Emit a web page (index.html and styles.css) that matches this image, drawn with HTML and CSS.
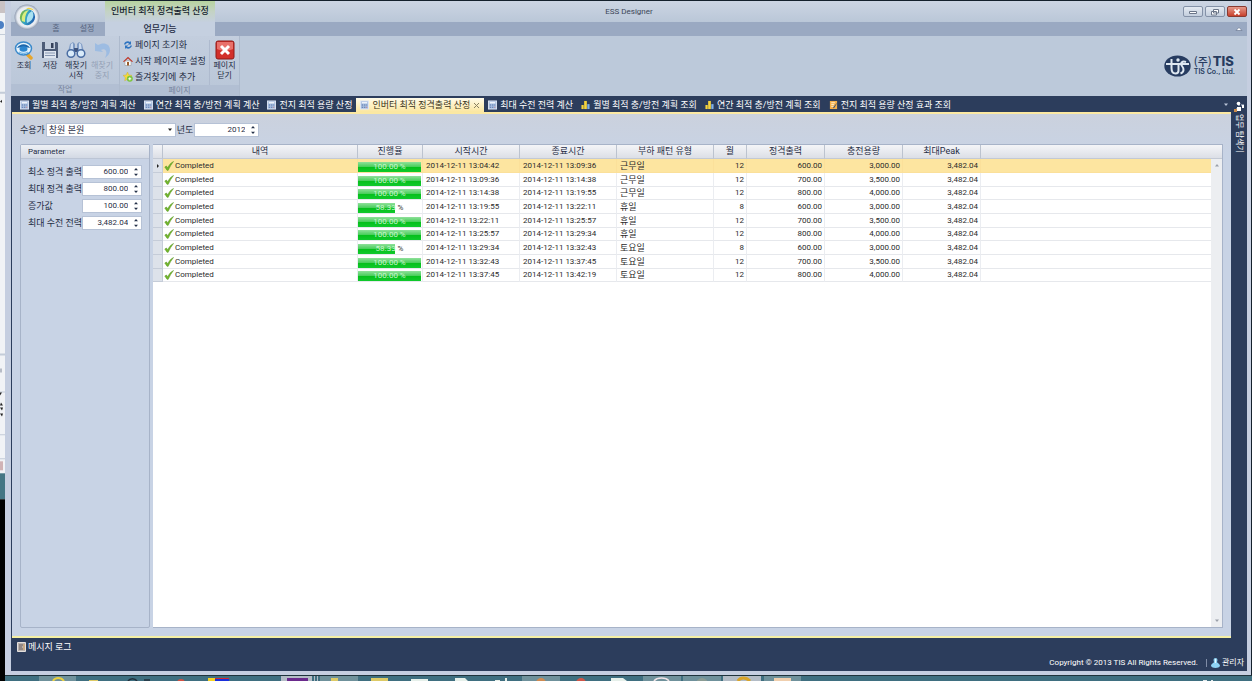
FILE: index.html
```html
<!DOCTYPE html>
<html lang="ko">
<head>
<meta charset="utf-8">
<title>ESS Designer</title>
<link rel="stylesheet" href="styles.css">
</head>
<body>
<svg class="defs" width="0" height="0" aria-hidden="true">
  <symbol id="i-calc" viewBox="0 0 10 10"><rect x=".5" y=".5" width="9" height="9" fill="#a9bfe0" stroke="#dfe7f5"/><path d="M2 2.5h6" stroke="#f4f7fc" stroke-width="1.5"/><path d="M2 5h1.5M4.5 5H6M7 5h1M2 7.5h1.500M4.500 7.500H6" stroke="#4f6ea5"/><path d="M7 7.500h1" stroke="#d0605a"/></symbol>
  <symbol id="i-chart" viewBox="0 0 10 10"><path d="M.5 5h2.500v4.500H.5z" fill="#f6d43c"/><path d="M3.500 .5h3v9h-3z" fill="#f6d43c"/><path d="M7 4h2.500v5.500H7z" fill="#7fb0e8"/></symbol>
  <symbol id="i-note" viewBox="0 0 10 10"><path d="M1 .5h8v9H1z" fill="#f4b04c"/><path d="M2.500 2.500h4M2.500 4.500h3M2.500 6.500h4" stroke="#fff3d8"/><path d="M9.500 2 5 7l-.5 1.500L6 8z" fill="#41506b"/></symbol>
  <symbol id="i-check" viewBox="0 0 10 10"><path d="M.8 6 2.500 5l1.200 2C5 4 6.800 1.800 9.500.5 7.500 3 5.600 6 4.200 9.300H3z" fill="#74b82a" stroke="#4f8e1c" stroke-width=".5"/></symbol>
  <symbol id="i-spin" viewBox="0 0 6 10"><path d="M1 3.200 3 1l2 2.200zM1 6.800h4L3 9z" fill="#26324a"/></symbol>
</svg>

<div class="desktop">
  <svg class="behind" viewBox="0 0 5 675" preserveAspectRatio="none" aria-hidden="true">
    <path fill="#f1f3f6" d="M0 0h5v675H0z"/><path fill="#c9c2c4" d="M0 0h5v12H0z"/>
    <circle cx="0" cy="24" r="4" fill="#4b7fc4"/><path fill="#c3ccd8" d="M0 33h5v1H0zM0 91h5v2H0zM0 353h5v2H0zM0 391h5v1H0zM0 434h5v1H0zM0 458h5v1H0z"/>
    <path fill="#b7bcc6" d="M0 368h2v4H0z"/><path fill="#222" d="M0 101l2-2v3zM0 392h2l-2 3zM0 405l1-3 2 3zM0 407h3l-1 3zM0 413h3l-1 3z"/>
    <path fill="#d0b3b6" d="M0 461h3v9H0z"/><path fill="#447684" d="M0 473h5v26H0z"/><path fill="#000" d="M0 499h5v176H0z"/>
  </svg>

  <div class="window">
    <header class="titlebar">
      <div class="context-title">인버터 최적 정격출력 산정</div>
      <h1 class="app-title">ESS Designer</h1>
      <div class="win-buttons">
        <button class="win-btn" aria-label="최소화"><svg width="10" height="8" viewBox="0 0 10 8"><path d="M1.500 3.500h7v2h-7z" fill="#fff" stroke="#6b7689"/></svg></button>
        <button class="win-btn" aria-label="이전 크기로"><svg width="10" height="8" viewBox="0 0 10 8"><path d="M3.500 1.500h5v3.500h-5zM1.500 3.500h5V7h-5z" fill="#fff" stroke="#6b7689"/></svg></button>
        <button class="win-btn win-close" aria-label="닫기"><svg width="10" height="8" viewBox="0 0 10 8"><path d="M2.500 1.500l5 5M7.500 1.500l-5 5" stroke="#fff" stroke-width="1.800"/></svg></button>
      </div>
      <button class="orb" aria-label="메뉴"><svg width="26" height="26" viewBox="0 0 26 26"><defs><radialGradient id="og"><stop offset="0" stop-color="#fff"/><stop offset=".8" stop-color="#e6eaf0"/><stop offset="1" stop-color="#8f9bb0"/></radialGradient><linearGradient id="lg" x1="0" x2="1"><stop offset="0" stop-color="#7cb93a"/><stop offset=".4" stop-color="#37a6c4"/><stop offset="1" stop-color="#1f5fae"/></linearGradient></defs><circle cx="13" cy="13" r="12.500" fill="url(#og)"/><ellipse cx="13.500" cy="13" rx="7.500" ry="8" transform="rotate(20 13 13)" fill="url(#lg)"/><path d="M13 19c-1-5 1-10 5-12 3 4 1 10-5 12z" fill="#a9e2f2"/><path d="M8 17C7 11 10 7 15 6c-3 3-4 6-4 12z" fill="#d9ee7d"/><path d="M12 4.500c3-1.500 6-.5 8 2-3-1-5-1.500-8-2z" fill="#f2d23b"/></svg></button>
    </header>

    <nav class="ribbon-tabs">
      <button class="rtab">홈</button>
      <button class="rtab">설정</button>
      <button class="rtab rtab-active">업무기능</button>
      <button class="collapse" aria-label="리본 최소화"><svg width="8" height="6" viewBox="0 0 8 6"><path d="M1 4.500 4 1.500l3 3z" fill="#fff" stroke="#5a6a86" stroke-width=".6"/></svg></button>
    </nav>

    <section class="ribbon">
      <div class="group group-work">
        <div class="group-body">
          <button class="big"><svg width="20" height="20" viewBox="0 0 20 20"><path d="M12 13l5 5" stroke="#e7a62c" stroke-width="3.500" stroke-linecap="round"/><ellipse cx="9.500" cy="8.500" rx="8" ry="6.500" fill="#e8f4fc" stroke="#3b8acb" stroke-width="1.500"/><path d="M3 8c3-5 10-5 13 0-2-1-11-1-13 0z" fill="#1e67ac"/><ellipse cx="9.500" cy="9" rx="4" ry="2.800" fill="#2b86cf"/><path d="M5 12c3 2 6 2 9 0" stroke="#7dbce8" stroke-width="1.500" fill="none"/></svg>조회</button>
          <button class="big"><svg width="20" height="20" viewBox="0 0 20 20"><path d="M2 2h15l1 1v15H2z" fill="#4d5c78"/><path d="M5 2h10v7H5z" fill="#c3cede"/><path d="M11 3h2.500v5H11z" fill="#35415a"/><path d="M4 11h12v7H4z" fill="#dfe6f0"/><path d="M5 13h10M5 15.500h10" stroke="#8797b2"/></svg>저장</button>
          <button class="big"><svg width="20" height="20" viewBox="0 0 20 20"><path d="M4 4l3-2 2 2v8H2zM16 4l-3-2-2 2v8h7z" fill="#7f9bc4"/><path d="M5 4l2-1v8H4zM15 4l-2-1v8h3z" fill="#c9d9ee"/><path d="M8 8h4v4H8z" fill="#3f5680"/><circle cx="5" cy="13.500" r="3.800" fill="#d9ebfa" stroke="#4a6da3" stroke-width="1.500"/><circle cx="15" cy="13.500" r="3.800" fill="#d9ebfa" stroke="#4a6da3" stroke-width="1.500"/></svg>해찾기<br>시작</button>
          <button class="big" disabled><svg width="20" height="20" viewBox="0 0 20 20"><path d="M3 3l3 2c5-3 12-2 12 5 0 3-2 6-5 8 1-3 2-5 1-7-1-2-3-2-5-1l2 2-8-1z" fill="#9dbce2"/></svg>해찾기<br>중지</button>
        </div>
        <div class="group-caption">작업</div>
      </div>
      <div class="group group-page">
        <div class="group-body">
          <div class="small-list">
            <button class="small"><svg width="10" height="10" viewBox="0 0 10 10"><path d="M1 4.500C1.500 1.500 5 .5 7 2l1-1v3.500H4.700L6 3.200C4.500 2.500 3 3 2.500 4.500zM9 5.500C8.500 8.500 5 9.500 3 8l-1 1V5.500h3.300L4 6.800C5.500 7.500 7 7 7.500 5.500z" fill="#2f74c0"/></svg>페이지 초기화</button>
            <button class="small"><svg width="10" height="10" viewBox="0 0 10 10"><path d="M2 5h6v4.500H2z" fill="#fff" stroke="#8d8d8d" stroke-width=".5"/><path d="M0 5.500 5 .8l5 4.700-1 .6-4-3.600L1 6.100z" fill="#c0392b"/><path d="M4 6h2v3.500H4z" fill="#9a5b2c"/></svg>시작 페이지로 설정</button>
            <button class="small"><svg width="10" height="10" viewBox="0 0 10 10"><path d="M4.500 0l1.400 3 3.100.4-2.300 2.200.6 3.200-2.800-1.600-2.800 1.600.6-3.200L0 3.400 3.100 3z" fill="#f5d93d" stroke="#c7a92c" stroke-width=".4"/><circle cx="6.800" cy="6.800" r="3" fill="#7cc53c"/><path d="M6.800 5.300v3M5.300 6.800h3" stroke="#fff"/></svg>즐겨찾기에 추가</button>
          </div>
          <button class="big big-close"><svg width="20" height="20" viewBox="0 0 20 20"><rect x="1" y="1" width="18" height="18" rx="2" fill="#d2302b" stroke="#8f1b18"/><path d="M2 2h16v7c-5 2-11 2-16 0z" fill="#e8716b"/><path d="M6 6l8 8M14 6l-8 8" stroke="#fff" stroke-width="3"/></svg>페이지<br>닫기</button>
        </div>
        <div class="group-caption">페이지</div>
      </div>
      <div class="brand">
        <svg width="27" height="22" viewBox="0 0 27 22" aria-hidden="true"><ellipse cx="13.500" cy="11" rx="13.200" ry="10.500" fill="#273c60"/><path d="M2 9h23M7.500 4v9c0 4 1.500 5.500 4 5.500 2 0 3-1 3-3V9" stroke="#dfe8f1" stroke-width="2" fill="none"/><circle cx="14" cy="5" r="1.700" fill="#dfe8f1"/><path d="M22 7c-4-1.500-6 1.500-4 4 2 2.500 2.500 6-1.500 7.500" stroke="#dfe8f1" stroke-width="2" fill="none"/></svg>
        <div class="brand-text"><div class="brand-top"><span class="brand-ju">(주)</span><span class="brand-tis">TIS</span></div><div class="brand-sub">TIS Co., Ltd.</div></div>
      </div>
    </section>

    <div class="workspace">
      <main class="main">
        <nav class="doc-tabs">
          <button class="dtab"><svg class="ic"><use href="#i-calc"/></svg>월별 최적 충/방전 계획 계산</button>
          <button class="dtab"><svg class="ic"><use href="#i-calc"/></svg>연간 최적 충/방전 계획 계산</button>
          <button class="dtab"><svg class="ic"><use href="#i-calc"/></svg>전지 최적 용량 산정</button>
          <button class="dtab dtab-active"><svg class="ic"><use href="#i-calc"/></svg>인버터 최적 정격출력 산정<svg width="7" height="7" viewBox="0 0 7 7"><path d="M1 1l5 5M6 1 1 6" stroke="#8a8062"/></svg></button>
          <button class="dtab"><svg class="ic"><use href="#i-calc"/></svg>최대 수전 전력 계산</button>
          <button class="dtab"><svg class="ic"><use href="#i-chart"/></svg>월별 최적 충/방전 계획 조회</button>
          <button class="dtab"><svg class="ic"><use href="#i-chart"/></svg>연간 최적 충/방전 계획 조회</button>
          <button class="dtab"><svg class="ic"><use href="#i-note"/></svg>전지 최적 용량 산정 효과 조회</button>
          <button class="more" aria-label="탭 목록"><svg width="6" height="4" viewBox="0 0 6 4"><path d="M1 .5h4L3 3z" fill="#b9c4d8"/></svg></button>
        </nav>

        <div class="page">
          <form class="filters">
            <label for="cust">수용가</label>
            <span class="field field-cust"><select id="cust"><option>창원 본원</option></select><svg width="6" height="4" viewBox="0 0 6 4"><path d="M1 .5h4L3 3z" fill="#222"/></svg></span>
            <label for="year">년도</label>
            <span class="field field-year"><input id="year" value="2012"><svg width="6" height="10"><use href="#i-spin"/></svg></span>
          </form>
          <div class="split">
            <section class="panel">
              <h2 class="panel-head">Parameter</h2>
              <div class="params">
                <label for="p1">최소 정격 출력</label><span class="field"><input id="p1" value="600.00"><svg width="6" height="10"><use href="#i-spin"/></svg></span>
                <label for="p2">최대 정격 출력</label><span class="field"><input id="p2" value="800.00"><svg width="6" height="10"><use href="#i-spin"/></svg></span>
                <label for="p3">증가값</label><span class="field"><input id="p3" value="100.00"><svg width="6" height="10"><use href="#i-spin"/></svg></span>
                <label for="p4">최대 수전 전력</label><span class="field"><input id="p4" value="3,482.04"><svg width="6" height="10"><use href="#i-spin"/></svg></span>
              </div>
            </section>
            <section class="gridbox">
              <table class="grid">
                <colgroup><col class="c-ind"><col class="c-desc"><col class="c-prog"><col class="c-time"><col class="c-time"><col class="c-time"><col class="c-mon"><col class="c-num"><col class="c-num"><col class="c-num"><col></colgroup>
                <thead><tr><th></th><th>내역</th><th>진행율</th><th>시작시간</th><th>종료시간</th><th>부하 패턴 유형</th><th>월</th><th>정격출력</th><th>충전용량</th><th>최대Peak</th><th></th></tr></thead>
                <tbody id="rows"></tbody>
              </table>
              <div class="scroll" aria-hidden="true"><svg width="6" height="4" viewBox="0 0 6 4"><path d="M1 3.500h4L3 1z" fill="#9aa0aa"/></svg><svg width="6" height="4" viewBox="0 0 6 4"><path d="M1 .5h4L3 3z" fill="#9aa0aa"/></svg></div>
            </section>
          </div>
        </div>
      </main>
      <aside class="side"><svg width="10" height="11" viewBox="0 0 10 11"><path d="M5 1v4M2 8h5M7 4h3" stroke="#cdd6e6"/><circle cx="4.500" cy="2.500" r="1.800" fill="#fff"/><path d="M3 6h4v4H3z" fill="#fff"/><path d="M0 8h3v3H0z" fill="#c98b4b"/><path d="M8 4h2v3H8z" fill="#fff"/></svg><button class="side-tab">업무 탐색기</button></aside>
    </div>

    <footer class="bottom">
      <button class="log"><svg width="9" height="10" viewBox="0 0 9 10"><path d="M.5.5h8v9h-8z" fill="#b9b2ae" stroke="#e4dfdc"/><path d="M2 3h4M2 5h3M2 7h4" stroke="#6c5f5c"/><path d="M7 2v6" stroke="#d8a15c"/></svg>메시지 로그</button>
      <div class="status"><span>Copyright © 2013 TIS All Rights Reserved.</span><span class="bar"></span><span class="user"><svg width="9" height="10" viewBox="0 0 9 10"><path d="M4.500 0c2 0 2.300 2 1.500 4 0 1 3 1.500 3 4-1 2.500-8 2.500-9 0C0 5.500 3 5 3 4 2.200 2 2.500 0 4.500 0z" fill="#8fd3f4"/><path d="M4.500 1v4" stroke="#e8f8ff"/></svg>관리자</span></div>
    </footer>
  </div>
</div>

<svg class="taskbar" viewBox="0 0 1252 6" preserveAspectRatio="xMinYMin slice" aria-hidden="true">
  <path fill="#3f6f80" d="M0 0h1252v6H0z"/><path fill="#000" d="M0 0h5v6H0z"/><path fill="#1f333c" d="M5 0h1247v1H5z"/>
  <path fill="#6f919b" d="M39 1h37v5H39zM320 1h38v5h-38zM522 1h38v5h-38zM643 1h38v5h-38zM683 1h38v5h-38zM764 1h37v5h-37z"/>
  <path fill="#b3bcc6" d="M281 1h31v5h-31zM314 1h1v5h-1zM317 1h1v5h-1zM723 1h38v5h-38z"/>
  <path fill="#6a2a8c" d="M287 3h21v3h-21z"/>
  <path d="M53 6c2-4 8-4 11 0" fill="none" stroke="#ead03e" stroke-width="2"/><path fill="#ddca66" d="M89 5h9v1h-9zM331 3h7v3h-7zM371 3h17v3h-17z"/>
  <path d="M128 6c2-3 7-3 9 0M144 5h6" fill="none" stroke="#22303c" stroke-width="1.500"/><circle cx="181" cy="8" r="4" fill="#d35142"/>
  <path fill="#f6d222" d="M208 3h7v3h-7z"/><path fill="#d42a2a" d="M215 3h14v1h-14z"/><path fill="#1a2fdc" d="M215 4h14v2h-14z"/>
  <path fill="#e6f0ea" d="M411 4h17v2h-17zM455 3h10l3 3h-13zM495 5h5v1h-5zM505 3h2v3h-2zM611 3h12l4 3h-16z"/>
  <circle cx="541" cy="8" r="5" fill="#cf8b52"/><circle cx="581" cy="8" r="5" fill="#cf5648"/><path d="M654 6c3-4 12-4 15 0" fill="none" stroke="#f1e4e8" stroke-width="1.500"/>
  <circle cx="702" cy="9" r="6" fill="#8b9c94"/><path d="M738 6c2-4 8-4 12 0" stroke="#d9a428" stroke-width="3" fill="none"/><path fill="#f0cfae" d="M774 3h17v3h-17z"/><path fill="#dfe9ec" d="M1203 5h4v1h-4zM1211 5h2v1h-2z"/>
</svg>
<script src="grid.js"></script>
</body>
</html>
```
FILE: styles.css
```css
* { box-sizing: border-box; }

body {
  margin: 0;
  height: 100vh;
  display: flex;
  flex-direction: column;
  overflow: hidden;
  background: #14202c;
  color: #1f2c44;
  font: 9px/12px Roboto, "Noto Sans CJK KR", sans-serif;
}

button, input, select { font: inherit; color: inherit; border: 0; margin: 0; padding: 0; background: none; }
button { cursor: pointer; white-space: nowrap; }
svg { display: block; flex: none; }
h1, h2 { margin: 0; font-weight: 400; }
.defs { position: absolute; }

.desktop { flex: 1; min-height: 0; display: flex; padding-top: 1px; }
.behind { width: 5px; height: 100%; }
.taskbar { width: 100%; height: 6px; }

.window {
  flex: 1;
  min-width: 0;
  display: flex;
  flex-direction: column;
  margin-right: 1px;
  padding: 0 4px 4px 6px;
  background: #c5cee0;
}

/* title bar */
.titlebar {
  position: relative;
  display: grid;
  grid-template-columns: 1fr auto 1fr;
  align-items: center;
  height: 21px;
  background: linear-gradient(#ccd5e3, #bac7d8);
}
.context-title {
  align-self: stretch;
  width: 110px;
  margin-left: 94px;
  line-height: 20px;
  text-align: center;
  font-weight: 500;
  white-space: nowrap;
  color: #151e2e;
  background: linear-gradient(#b7d39f, #c4d3c4 50%, #c5d0de);
}
.app-title { font-size: 8px; color: #3b4658; }
.win-buttons { justify-self: end; display: flex; gap: 2px; }
.win-btn {
  display: flex;
  align-items: center;
  justify-content: center;
  width: 20px;
  height: 11px;
  border: 1px solid #8492a8;
  border-radius: 2px;
  background: linear-gradient(#e4eaf2, #c3cedd);
}
.win-close { border-color: #8a3a30; background: linear-gradient(#e59a8b, #c8402c); }
.orb { position: absolute; left: 3px; top: 3px; z-index: 2; }

/* ribbon */
.ribbon-tabs {
  display: flex;
  height: 14px;
  padding-left: 30px;
  background: #9aa9c2;
}
.rtab { width: 30px; line-height: 14px; font-size: 8px; color: #56647f; }
.rtab:nth-child(2) { width: 34px; padding-right: 2px; }
.rtab-active { width: 110px; font-size: 9px; font-weight: 500; color: #1f2c44; background: #c5d0e0; }
.collapse { margin-left: auto; padding: 0 4px; }

.ribbon { display: flex; height: 60px; background: #bcc9da; }
.group { display: flex; flex-direction: column; border-right: 1px solid #adbacd; background: linear-gradient(#c3cede, #b9c6d8); }
.group-body { flex: 1; display: flex; padding-top: 4px; }
.group-work .group-body { width: 108px; }
.group-caption { height: 12px; line-height: 12px; text-align: center; font-size: 8px; color: #76839b; background: #b2bfd3; }
.big {
  display: flex;
  flex-direction: column;
  align-items: center;
  width: 26px;
  font-size: 8px;
  line-height: 10px;
}
.big svg { margin-bottom: 1px; }
.big:disabled { color: #94a1b6; }
.big-close { width: 30px; border-left: 1px solid #aebace; }
.small-list { display: flex; flex-direction: column; width: 89px; padding-left: 3px; margin-top: -3px; }
.small { display: flex; align-items: center; gap: 2px; height: 16px; }

.brand { margin-left: auto; display: flex; align-items: center; gap: 3px; padding-right: 12px; color: #273c60; }
.brand-top { display: flex; align-items: center; gap: 1px; height: 11px; }
.brand-tis { font: 800 13px/11px Inter, sans-serif; }
.brand-ju { font: 500 11px/11px "Noto Sans CJK KR", sans-serif; }
.brand-sub { margin-top: 1px; font: 600 7px/8px Inter, sans-serif; }

/* document area */
.workspace { flex: 1; min-height: 0; display: flex; background: #2c3d5c; }
.main { flex: 1; min-width: 0; display: flex; flex-direction: column; padding-left: 1px; }
.doc-tabs { display: flex; height: 18px; padding: 2px 2px 0 4px; border-bottom: 2px solid #fbe8a2; }
.dtab { display: flex; align-items: center; gap: 3px; padding: 0 4px; color: #fff; }
.dtab-active { color: #3a3420; background: linear-gradient(#fffbea, #fbe6a0); }
.ic { width: 9px; height: 10px; }
.more { margin-left: auto; }

.page {
  flex: 1;
  min-height: 0;
  display: flex;
  flex-direction: column;
  padding: 9px 8px 8px;
  border-bottom: 2px solid #f5f0a4;
  background: linear-gradient(#cbd1dd, #c8d3e5 40px);
}
.filters { display: flex; align-items: center; gap: 1px; height: 14px; margin-bottom: 7px; }
.field { display: flex; align-items: center; height: 14px; padding-right: 2px; border: 1px solid #b6c2d6; background: #fff; }
.field input { flex: 1; width: 0; min-width: 0; padding-right: 5px; text-align: right; font-size: 8px; line-height: 12px; outline: 0; }
.field select { flex: 1; appearance: none; padding-left: 2px; line-height: 12px; outline: 0; }
.field-cust { width: 130px; }
.field-year { width: 65px; }

.split { flex: 1; min-height: 0; display: flex; gap: 3px; }
.panel { width: 130px; border: 1px solid #a7b3c8; border-radius: 2px; }
.panel-head { height: 14px; padding-left: 7px; font-size: 8px; line-height: 13px; border-bottom: 1px solid #bcc5d5; background: linear-gradient(#edf0f5, #d3d9e4); }
.params { display: grid; grid-template-columns: 1fr 60px; row-gap: 3px; align-items: center; padding: 6px 7px 0; white-space: nowrap; }

.gridbox { position: relative; flex: 1; min-width: 0; border: 1px solid #a7b3c8; border-left-width: 0; background: #fff; overflow: hidden; }
.grid { width: 100%; table-layout: fixed; border-collapse: separate; border-spacing: 0; }
.c-ind { width: 10px; }
.c-desc { width: 195px; }
.c-prog { width: 65px; }
.c-time { width: 97px; }
.c-mon { width: 33px; }
.c-num { width: 78px; }
.grid th {
  height: 14px;
  padding: 0;
  line-height: 13px;
  font-weight: 400;
  border-right: 1px solid #bcc3cf;
  border-bottom: 1px solid #c3c9d4;
  background: linear-gradient(#f4f5f8, #dcdfe6);
}
.grid td { height: 14px; padding: 0 2px; line-height: 12px; white-space: nowrap; border-right: 1px solid #ebedf1; border-bottom: 1px solid #e6e8ec; color: #2b2b2b; }
.grid tr:nth-child(3n) td { height: 13px; }
.grid td:first-child { padding: 0 0 0 3px; background: #dde2ea; border-color: #c5ccd8; }
.grid th:last-child, .grid td:last-child { border-right: 0; }
.grid .sel td:not(:first-child) { background: #fde5a0; border-color: #fbe09a; }
.grid .n { padding-right: 2px; text-align: right; font-size: 8px; }
.grid .t, .grid .k { padding-left: 3px; }
.grid .t { font-size: 8px; }
.grid .p { padding: 0 1px 0 0; }
.grid .d { padding-left: 1px; }
.done { display: flex; align-items: center; gap: 1px; font-size: 8px; }
.meter { position: relative; height: 10px; margin-top: 2px; background: #fff; }
.meter-fill { height: 10px; background: linear-gradient(#8fe09a, #4ccf5e 45%, #06c01c 55%, #10c92c); }
.meter-text { position: absolute; inset: 0; text-align: center; font-size: 8px; line-height: 9px; color: #c9f7cf; }
.meter-unit { color: #333; }
.full .meter-unit { color: inherit; }

.scroll {
  position: absolute;
  top: 14px;
  right: 0;
  bottom: 0;
  width: 11px;
  display: flex;
  flex-direction: column;
  justify-content: space-between;
  align-items: center;
  padding: 4px 0;
  background: #eceef1;
}

.side { width: 16px; display: flex; flex-direction: column; align-items: center; gap: 2px; padding-top: 5px; }
.side-tab { writing-mode: vertical-rl; text-orientation: sideways; font-size: 8px; line-height: 12px; color: #fff; }

/* bottom bar */
.bottom { height: 33px; display: flex; justify-content: space-between; padding: 3px 3px 2px 6px; color: #fff; background: #2c3d5c; }
.log { align-self: flex-start; display: flex; align-items: center; gap: 2px; }
.status { align-self: flex-end; display: flex; align-items: center; gap: 8px; font-size: 8px; }
.bar { width: 1px; height: 8px; background: #7f8ca6; }
.user { display: flex; align-items: center; gap: 2px; margin-left: -4px; }
```
FILE: grid.js
```js
const data = [
  ["100.00", "13:04:42", "13:09:36", "근무일", 12, "600.00", "3,000.00"],
  ["100.00", "13:09:36", "13:14:38", "근무일", 12, "700.00", "3,500.00"],
  ["100.00", "13:14:38", "13:19:55", "근무일", 12, "800.00", "4,000.00"],
  ["58.33", "13:19:55", "13:22:11", "휴일", 8, "600.00", "3,000.00"],
  ["100.00", "13:22:11", "13:25:57", "휴일", 12, "700.00", "3,500.00"],
  ["100.00", "13:25:57", "13:29:34", "휴일", 12, "800.00", "4,000.00"],
  ["58.33", "13:29:34", "13:32:43", "토요일", 8, "600.00", "3,000.00"],
  ["100.00", "13:32:43", "13:37:45", "토요일", 12, "700.00", "3,500.00"],
  ["100.00", "13:37:45", "13:42:19", "토요일", 12, "800.00", "4,000.00"]
];
document.getElementById("rows").innerHTML = data.map(([p, s, e, kind, month, out, cap], i) => `
  <tr class="${i === 0 ? "sel" : ""}">
    <td>${i === 0 ? '<svg width="4" height="6" viewBox="0 0 4 6"><path d="M1 1v4l2-2z" fill="#222"/></svg>' : ""}</td>
    <td class="d"><div class="done"><svg width="10" height="10"><use href="#i-check"/></svg>Completed</div></td>
    <td class="p"><div class="meter ${p === "100.00" ? "full" : ""}"><div class="meter-fill" style="width:${p}%"></div><div class="meter-text">${p} <span class="meter-unit">%</span></div></div></td>
    <td class="t">2014-12-11 ${s}</td>
    <td class="t">2014-12-11 ${e}</td>
    <td class="k">${kind}</td>
    <td class="n">${month}</td>
    <td class="n">${out}</td>
    <td class="n">${cap}</td>
    <td class="n">3,482.04</td>
    <td></td>
  </tr>`).join("");
```
